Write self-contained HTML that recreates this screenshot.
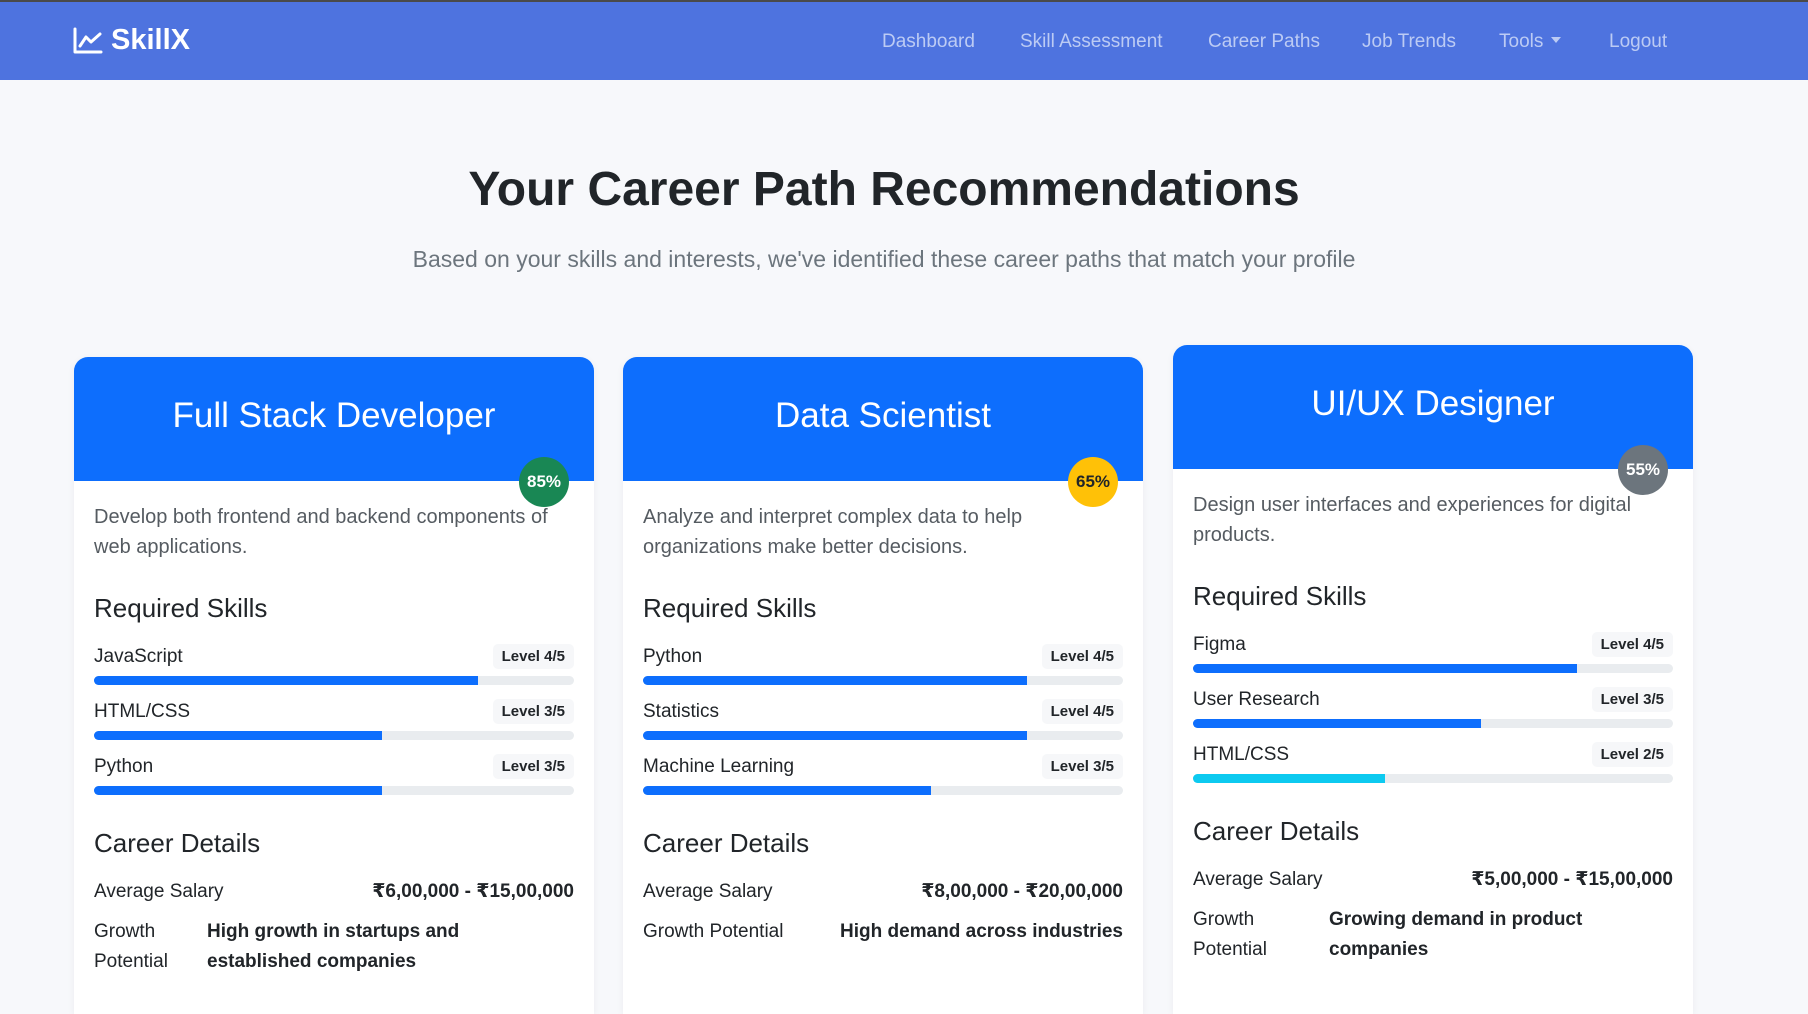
<!DOCTYPE html>
<html style="height:1014px;overflow:hidden"><head><meta charset="utf-8"><style>
*{box-sizing:border-box;margin:0;padding:0}
body{width:1808px;height:1014px;overflow:hidden;background:#f7f8fb;font-family:"Liberation Sans","DejaVu Sans",sans-serif;color:#212529;position:relative}
.nav{position:absolute;left:0;top:0;width:1808px;height:80px;background:#4e73df;border-top:2px solid #4a4a4a}
.brand{position:absolute;left:73px;top:22px;color:#fff;font-weight:bold;font-size:29px;display:flex;align-items:center;gap:8px}
.nav a{position:absolute;top:29px;color:#bccbf4;font-size:19px;text-decoration:none;white-space:nowrap}
.caret{display:inline-block;border-left:5px solid transparent;border-right:5px solid transparent;border-top:6px solid #bccbf4;vertical-align:middle;margin-left:8px;margin-top:-3px}
h1{position:absolute;left:0;width:1768px;text-align:center;top:162px;font-size:48px;font-weight:bold;color:#212529}
.sub{position:absolute;left:0;width:1768px;text-align:center;top:246px;font-size:23px;color:#6c757d}
.card{position:absolute;width:520px;background:#fff;border-radius:14px 14px 0 0;box-shadow:0 2px 8px rgba(0,0,0,.05)}
.hd{position:absolute;left:0;top:0;width:100%;height:124px;background:#0d6efd;border-radius:14px 14px 0 0;color:#fff;text-align:center;font-size:35px;line-height:118px}
.badge{position:absolute;right:25px;top:100px;width:50px;height:50px;border-radius:50%;color:#fff;font-weight:bold;font-size:17px;line-height:50px;text-align:center}
.ab{position:absolute;left:20px;right:20px}
.desc{top:145px;font-size:20px;line-height:30px;color:#555b61}
.h4{font-size:26px;line-height:32px;color:#212529}
.sk{font-size:19px;line-height:24px}
.lv{position:absolute;right:0;top:-1px;background:#f6f7f9;border-radius:5px;font-weight:bold;font-size:15px;line-height:25px;padding:0 9px}
.bar{position:absolute;left:0;right:0;top:31px;height:9px;background:#e9ecef;border-radius:5px;overflow:hidden}
.bar i{display:block;height:100%;background:#0d6efd}
.row{display:flex;justify-content:space-between;font-size:19px;line-height:30px}
.row b{font-weight:bold}
</style></head><body>
<div class="nav">
<div class="brand"><svg width="30" height="28" viewBox="0 0 30 28" fill="none" stroke="#fff" stroke-width="3" stroke-linecap="round" stroke-linejoin="round"><path d="M2 2V25H28"/><path d="M7 19L13 10L18 15L27 7"/></svg>SkillX</div>
<a style="left:882px">Dashboard</a>
<a style="left:1020px">Skill Assessment</a>
<a style="left:1208px">Career Paths</a>
<a style="left:1362px">Job Trends</a>
<a style="left:1499px">Tools<span class="caret"></span></a>
<a style="left:1609px">Logout</a>
</div>
<h1>Your Career Path Recommendations</h1>
<div class="sub">Based on your skills and interests, we've identified these career paths that match your profile</div>

<div class="card" style="left:74px;top:357px;height:657px">
<div class="hd">Full Stack Developer</div>
<div class="badge" style="background:#198754">85%</div>
<div class="ab desc" style="right:30px">Develop both frontend and backend components of web applications.</div>
<div class="ab h4" style="top:235px">Required Skills</div>
<div class="ab sk" style="top:288px">JavaScript<span class="lv">Level 4/5</span><div class="bar"><i style="width:80%"></i></div></div>
<div class="ab sk" style="top:343px">HTML/CSS<span class="lv">Level 3/5</span><div class="bar"><i style="width:60%"></i></div></div>
<div class="ab sk" style="top:398px">Python<span class="lv">Level 3/5</span><div class="bar"><i style="width:60%"></i></div></div>
<div class="ab h4" style="top:470px">Career Details</div>
<div class="ab row" style="top:520px"><span>Average Salary</span><b>₹6,00,000 - ₹15,00,000</b></div>
<div class="ab row" style="top:560px;justify-content:flex-start"><span style="width:100px">Growth Potential</span><b style="width:290px;margin-left:13px">High growth in startups and established companies</b></div>
</div>

<div class="card" style="left:623px;top:357px;height:657px">
<div class="hd">Data Scientist</div>
<div class="badge" style="background:#ffc107;color:#212529">65%</div>
<div class="ab desc" style="right:60px">Analyze and interpret complex data to help organizations make better decisions.</div>
<div class="ab h4" style="top:235px">Required Skills</div>
<div class="ab sk" style="top:288px">Python<span class="lv">Level 4/5</span><div class="bar"><i style="width:80%"></i></div></div>
<div class="ab sk" style="top:343px">Statistics<span class="lv">Level 4/5</span><div class="bar"><i style="width:80%"></i></div></div>
<div class="ab sk" style="top:398px">Machine Learning<span class="lv">Level 3/5</span><div class="bar"><i style="width:60%"></i></div></div>
<div class="ab h4" style="top:470px">Career Details</div>
<div class="ab row" style="top:520px"><span>Average Salary</span><b>₹8,00,000 - ₹20,00,000</b></div>
<div class="ab row" style="top:560px"><span>Growth Potential</span><b>High demand across industries</b></div>
</div>

<div class="card" style="left:1173px;top:345px;height:669px">
<div class="hd">UI/UX Designer</div>
<div class="badge" style="background:#6c757d">55%</div>
<div class="ab desc">Design user interfaces and experiences for digital products.</div>
<div class="ab h4" style="top:235px">Required Skills</div>
<div class="ab sk" style="top:288px">Figma<span class="lv">Level 4/5</span><div class="bar"><i style="width:80%"></i></div></div>
<div class="ab sk" style="top:343px">User Research<span class="lv">Level 3/5</span><div class="bar"><i style="width:60%"></i></div></div>
<div class="ab sk" style="top:398px">HTML/CSS<span class="lv">Level 2/5</span><div class="bar"><i style="width:40%;background:#0dcaf0"></i></div></div>
<div class="ab h4" style="top:470px">Career Details</div>
<div class="ab row" style="top:520px"><span>Average Salary</span><b>₹5,00,000 - ₹15,00,000</b></div>
<div class="ab row" style="top:560px;justify-content:flex-start"><span style="width:100px">Growth Potential</span><b style="width:290px;margin-left:36px">Growing demand in product companies</b></div>
</div>
</body></html>
